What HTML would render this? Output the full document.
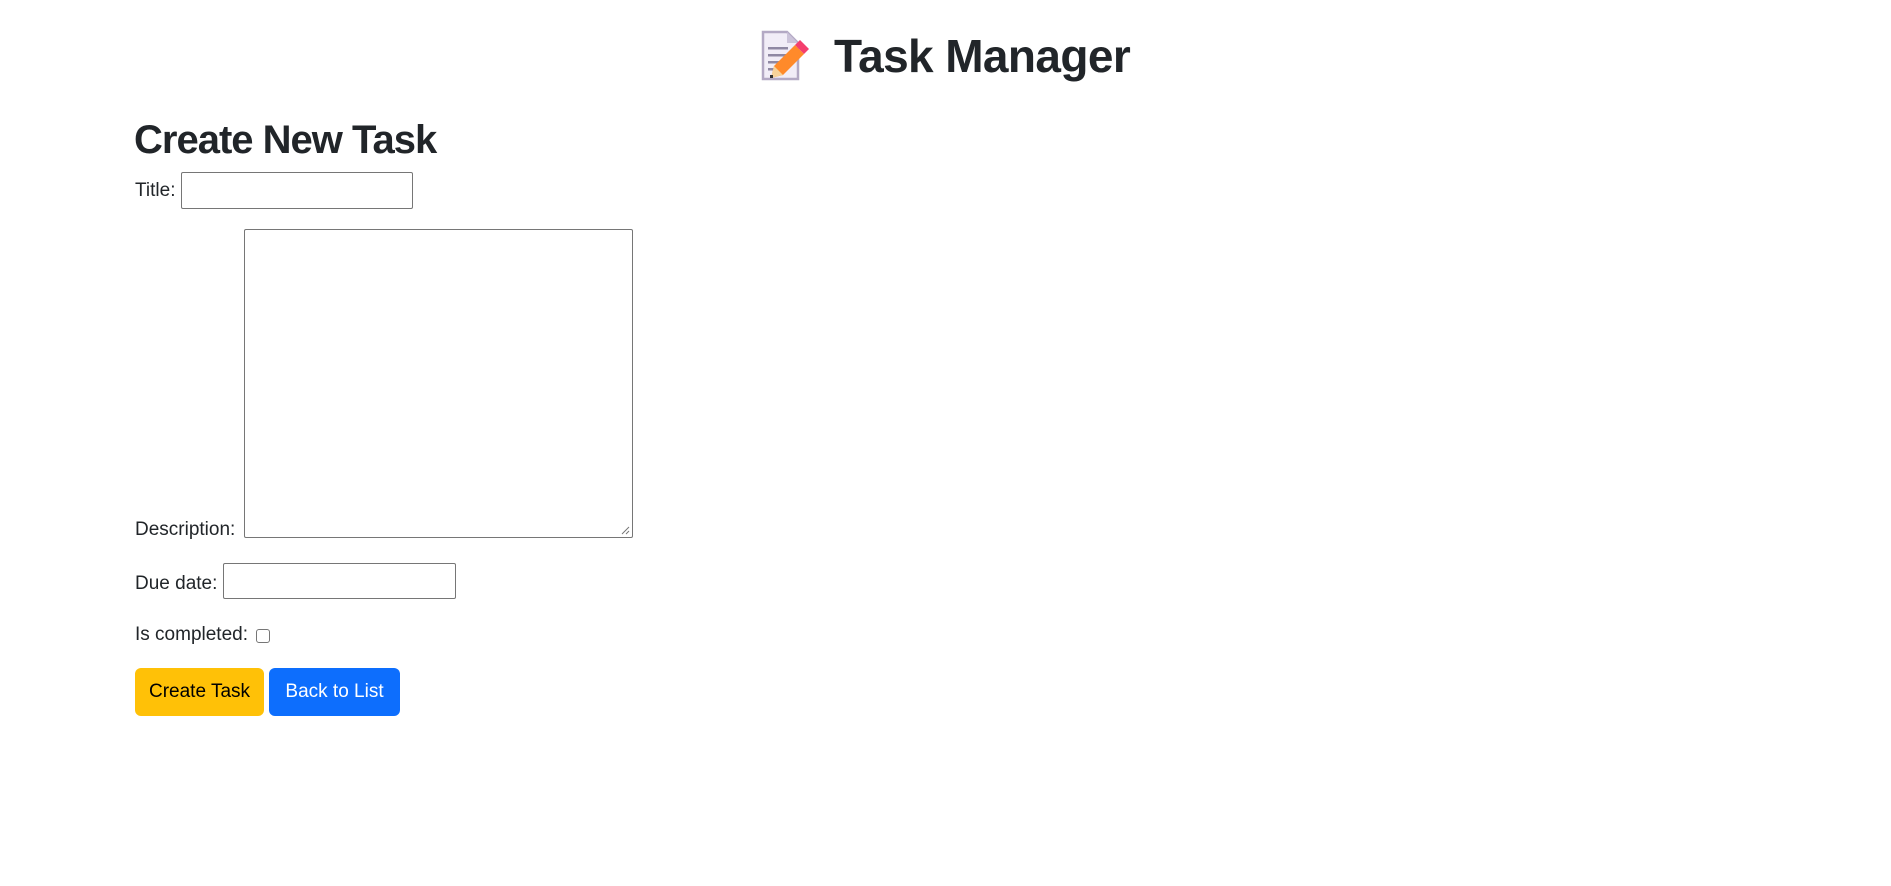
<!DOCTYPE html>
<html><head><meta charset="utf-8"><style>
html,body{margin:0;padding:0;background:#fff;width:1891px;height:886px;overflow:hidden;font-family:"Liberation Sans",sans-serif;color:#212529;}
.a{position:absolute;white-space:nowrap;}
h1,h2{margin:0;font-weight:bold;}
.inp{position:absolute;border:1px solid #767676;border-radius:2px;background:#fff;box-sizing:border-box;}
.btn{position:absolute;border-radius:6px;font-size:19px;text-align:center;line-height:48px;height:48px;box-sizing:border-box;}
</style></head><body>
<svg class="a" style="left:760px;top:30px" width="52" height="52" viewBox="0 0 52 52">
<path d="M3 2 H27 L38 13 V49 H3 Z" fill="#f1edf7" stroke="#b3a9c4" stroke-width="2.5"/>
<path d="M27 2 V13 H38 Z" fill="#cbc3d9"/>
<rect x="8" y="17" width="20" height="2.5" fill="#8f88a3"/>
<rect x="8" y="24" width="20" height="2.5" fill="#8f88a3"/>
<rect x="8" y="31" width="12" height="2.5" fill="#8f88a3"/>
<rect x="8" y="38" width="8" height="2.5" fill="#8f88a3"/>
<path d="M11 48 L14 36 L35 15 L44 24 L23 45 Z" fill="#ff8a2a"/>
<path d="M11 48 L14 36 L23 45 Z" fill="#f6d29a"/>
<path d="M35 15 L40 10 L49 19 L44 24 Z" fill="#f43f6d"/>
<rect x="10" y="45" width="3" height="3" fill="#333"/>
</svg>
<h1 class="a" style="left:834px;top:26px;font-size:46px;line-height:60px;letter-spacing:-0.6px;">Task Manager</h1>
<h2 class="a" style="left:134px;top:117px;font-size:40px;line-height:46px;letter-spacing:-1px;">Create New Task</h2>
<div class="a" style="left:135px;top:180px;font-size:19px;">Title:</div>
<div class="inp" style="left:181px;top:172px;width:232px;height:37px;"></div>
<div class="a" style="left:135px;top:519px;font-size:19px;">Description:</div>
<div class="inp" style="left:244px;top:229px;width:389px;height:309px;"></div>
<svg class="a" style="left:620px;top:525px" width="10" height="10"><path d="M2 9 L9 2 M6 9 L9 6" stroke="#777" stroke-width="1"/></svg>
<div class="a" style="left:135px;top:573px;font-size:19px;">Due date:</div>
<div class="inp" style="left:223px;top:563px;width:233px;height:36px;"></div>
<div class="a" style="left:135px;top:624px;font-size:19px;">Is completed:</div>
<div class="inp" style="left:256px;top:629px;width:14px;height:14px;border-radius:3px;"></div>
<div class="btn" style="left:135px;top:668px;width:129px;background:#ffc107;color:#000;">Create Task</div>
<div class="btn" style="left:269px;top:668px;width:131px;background:#0d6efd;color:#fff;">Back to List</div>
</body></html>
